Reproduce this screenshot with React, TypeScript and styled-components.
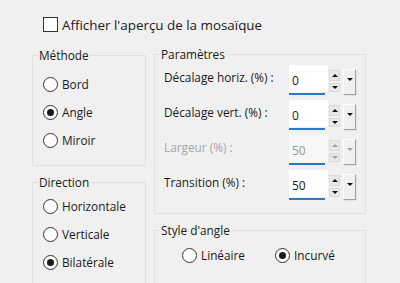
import React from "react";
import styled, { createGlobalStyle } from "styled-components";

const GlobalStyle = createGlobalStyle`
  html, body {
    margin: 0;
    padding: 0;
    background: #f0f0f0;
  }
  body {
    font-family: "Open Sans", "Liberation Sans", sans-serif;
    color: #1a1a1a;
  }
`;

const Page = styled.div`
  width: 400px;
  height: 283px;
  overflow: hidden;
  box-sizing: border-box;
  padding: 17px 0 0 32px;
`;

const PreviewRow = styled.div`
  display: flex;
  align-items: center;
  gap: 4px;
  height: 15px;
  margin-left: 11px;
  font-size: 13.4px;
  white-space: nowrap;
`;

const CheckBox = styled.span`
  flex: none;
  width: 15px;
  height: 15px;
  box-sizing: border-box;
  border: 1px solid #333;
  background: #fff;
`;

const Columns = styled.div`
  display: flex;
  align-items: flex-start;
  gap: 8px;
  margin-top: 14px;
`;

const Column = styled.div<{ $width: number; $offset?: number }>`
  display: flex;
  flex-direction: column;
  gap: 8px;
  width: ${(p) => p.$width}px;
  margin-top: ${(p) => p.$offset ?? 0}px;
`;

const Group = styled.fieldset<{ $height: number }>`
  margin: 0;
  padding: 0;
  min-width: 0;
  box-sizing: border-box;
  height: ${(p) => p.$height}px;
  border: 1px solid #e0e0e0;
`;

const GroupTitle = styled.legend`
  margin-left: 5px;
  padding: 0 1px;
  font-size: 11.8px;
  line-height: 16px;
`;

const RadioList = styled.div<{ $top: number }>`
  display: flex;
  flex-direction: column;
  padding: ${(p) => p.$top}px 0 0 10px;
`;

const RadioItem = styled.div`
  display: flex;
  align-items: center;
  gap: 4px;
  height: 28px;
  font-size: 11.8px;
`;

const RadioCircle = styled.span<{ $checked?: boolean }>`
  flex: none;
  display: grid;
  place-items: center;
  width: 15px;
  height: 15px;
  box-sizing: border-box;
  border: 1px solid #333;
  border-radius: 50%;
  background: #fff;

  &::after {
    content: "";
    display: ${(p) => (p.$checked ? "block" : "none")};
    width: 7px;
    height: 7px;
    border-radius: 50%;
    background: #1a1a1a;
  }
`;

const ParamGrid = styled.div`
  display: grid;
  grid-template-columns: 125px 68px;
  row-gap: 6px;
  padding: 3px 0 0 9px;
`;

const ParamLabel = styled.div<{ $disabled?: boolean }>`
  font-size: 11.8px;
  line-height: 16px;
  margin-top: 4px;
  color: ${(p) => (p.$disabled ? "#a6a6a6" : "#1a1a1a")};
  white-space: nowrap;
`;

const Spinner = styled.div`
  display: flex;
  align-items: flex-start;
  height: 29px;
`;

const EditColumn = styled.div`
  display: flex;
  flex-direction: column;
`;

const EditBox = styled.div<{ $disabled?: boolean }>`
  width: 39px;
  height: 27px;
  box-sizing: border-box;
  padding: 3px 0 0 3px;
  display: flex;
  align-items: center;
  background: ${(p) => (p.$disabled ? "#f7f7f7" : "#fff")};
  color: ${(p) => (p.$disabled ? "#9a9a9a" : "#1a1a1a")};
  font-size: 12px;
`;

const Underline = styled.div`
  width: 36px;
  height: 2px;
  margin-top: 1px;
  background: #2b78c6;
`;

const SpinButtons = styled.div`
  display: flex;
  flex-direction: column;
  gap: 2px;
  margin: 5px 0 0 1px;
`;

const SpinButton = styled.div<{ $height: number }>`
  display: grid;
  place-items: center;
  width: 11px;
  height: ${(p) => p.$height}px;
  box-sizing: border-box;
  background: #e8e8e8;
  border: 1px solid #dadada;
`;

const Arrow = styled.span<{ $dir: "up" | "down"; $size: number; $disabled?: boolean }>`
  width: 0;
  height: 0;
  border-left: ${(p) => p.$size}px solid transparent;
  border-right: ${(p) => p.$size}px solid transparent;
  ${(p) =>
    p.$dir === "up"
      ? `border-bottom: ${p.$size}px solid ${p.$disabled ? "#a0a0a0" : "#111"};`
      : `border-top: ${p.$size}px solid ${p.$disabled ? "#a0a0a0" : "#111"};`}
`;

const DropButton = styled.div`
  display: flex;
  justify-content: center;
  padding-top: 8px;
  width: 13px;
  height: 26px;
  margin: 4px 0 0 3px;
  box-sizing: border-box;
  background: #f0f0f0;
  border-top: 1px solid #fff;
  border-left: 1px solid #fff;
  border-right: 1px solid #a0a0a0;
  border-bottom: 1px solid #a0a0a0;
  box-shadow: 1px 1px 0 #e3e3e3;
`;

const StyleRow = styled.div`
  display: grid;
  grid-template-columns: 93px auto;
  padding: 3px 0 0 27px;
`;

type Param = { label: string; value: string; disabled?: boolean };

const params: Param[] = [
  { label: "Décalage horiz. (%) :", value: "0" },
  { label: "Décalage vert. (%) :", value: "0" },
  { label: "Largeur (%) :", value: "50", disabled: true },
  { label: "Transition (%) :", value: "50" },
];

const Radio = ({ label, checked }: { label: string; checked?: boolean }) => (
  <RadioItem>
    <RadioCircle $checked={checked} />
    {label}
  </RadioItem>
);

const NumberSpinner = ({ value, disabled }: { value: string; disabled?: boolean }) => (
  <Spinner>
    <EditColumn>
      <EditBox $disabled={disabled}>{value}</EditBox>
      <Underline />
    </EditColumn>
    <SpinButtons>
      <SpinButton $height={11}>
        <Arrow $dir="up" $size={3} $disabled={disabled} />
      </SpinButton>
      <SpinButton $height={9}>
        <Arrow $dir="down" $size={3} $disabled={disabled} />
      </SpinButton>
    </SpinButtons>
    <DropButton>
      <Arrow $dir="down" $size={3.5} $disabled={disabled} />
    </DropButton>
  </Spinner>
);

export default function App() {
  return (
    <>
      <GlobalStyle />
      <Page>
        <PreviewRow>
          <CheckBox />
          Afficher l'aperçu de la mosaïque
        </PreviewRow>
        <Columns>
          <Column $width={114} $offset={1}>
            <Group $height={119}>
              <GroupTitle>Méthode</GroupTitle>
              <RadioList $top={7}>
                <Radio label="Bord" />
                <Radio label="Angle" checked />
                <Radio label="Miroir" />
              </RadioList>
            </Group>
            <Group $height={140}>
              <GroupTitle>Direction</GroupTitle>
              <RadioList $top={2}>
                <Radio label="Horizontale" />
                <Radio label="Verticale" />
                <Radio label="Bilatérale" checked />
              </RadioList>
            </Group>
          </Column>
          <Column $width={212}>
            <Group $height={168}>
              <GroupTitle>Paramètres</GroupTitle>
              <ParamGrid>
                {params.map((p) => (
                  <React.Fragment key={p.label}>
                    <ParamLabel $disabled={p.disabled}>{p.label}</ParamLabel>
                    <NumberSpinner value={p.value} disabled={p.disabled} />
                  </React.Fragment>
                ))}
              </ParamGrid>
            </Group>
            <Group $height={100}>
              <GroupTitle>Style d'angle</GroupTitle>
              <StyleRow>
                <Radio label="Linéaire" />
                <Radio label="Incurvé" checked />
              </StyleRow>
            </Group>
          </Column>
        </Columns>
      </Page>
    </>
  );
}
